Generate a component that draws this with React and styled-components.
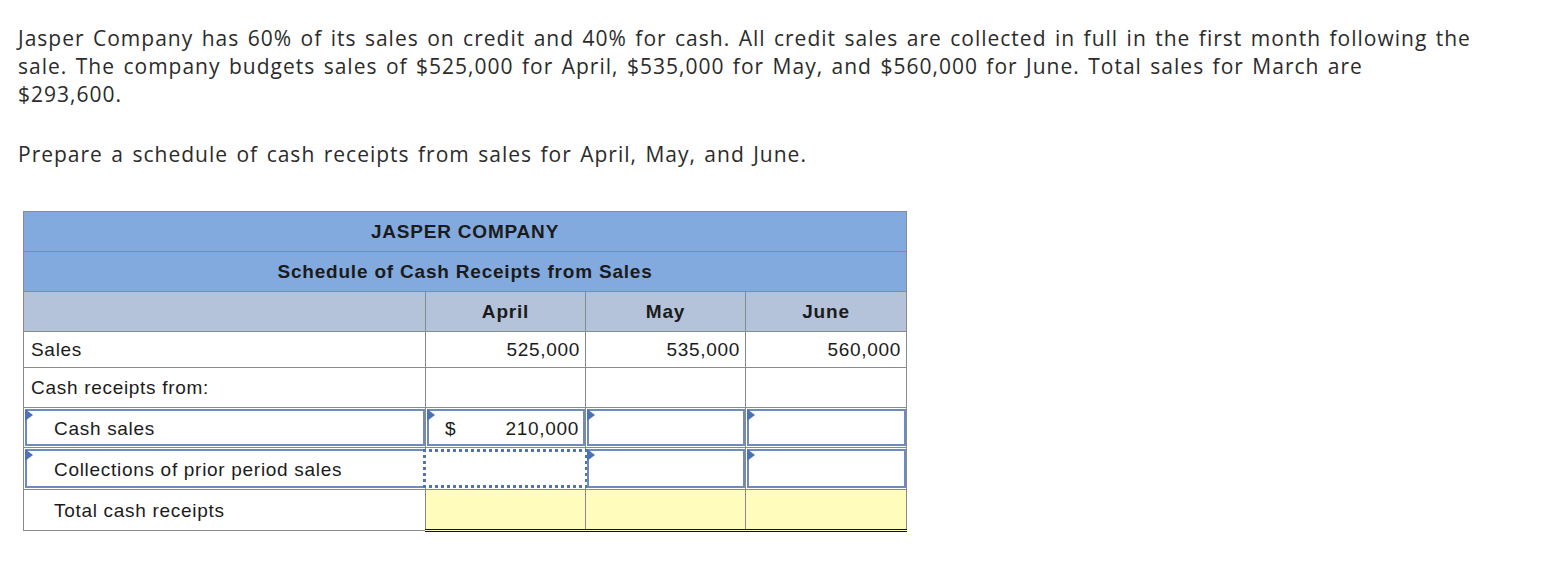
import React from "react";
import styled, { createGlobalStyle } from "styled-components";

const Global = createGlobalStyle`
  html, body { margin: 0; padding: 0; background: #fff; }
  body { font-family: "Open Sans", "Liberation Sans", sans-serif; }
`;

const Page = styled.div`
  padding: 24px 0 0 18px;
  width: 1520px;
`;

const Para = styled.p`
  margin: 0 0 32px 0;
  font-family: "Open Sans", "Liberation Sans", sans-serif;
  font-size: 21px;
  letter-spacing: 1px;
  word-spacing: 2px;
  line-height: 28px;
  color: #2b2b2b;
`;

const TableWrap = styled.div`
  margin-left: 5px;
  margin-top: 43px;
`;

const Table = styled.table`
  border-collapse: collapse;
  table-layout: fixed;
  width: 884px;
  font-family: "Liberation Sans", Arial, sans-serif;
  font-size: 19px;
  letter-spacing: 0.7px;
  color: #1b1b1b;
`;

const TitleCell = styled.td`
  background: #83aade;
  border: 1px solid #8a8a8a;
  height: 39px;
  padding: 0;
  text-align: center;
  font-weight: bold;
  letter-spacing: 0.8px;
`;

const HeadCell = styled.td`
  background: #b4c2da;
  border: 1px solid #8a8a8a;
  height: 39px;
  padding: 0;
  text-align: center;
  font-weight: bold;
  letter-spacing: 0.8px;
`;

const Cell = styled.td`
  border: 1px solid #8a8a8a;
  height: ${(p) => p.$h || 36}px;
  padding: 1px 5px 0 ${(p) => (p.$indent ? 30 : 7)}px;
  text-align: ${(p) => (p.$num ? "right" : "left")};
  background: ${(p) => (p.$total ? "#fffcbc" : "#fff")};
  border-bottom: ${(p) => (p.$total ? "3px double #111" : "1px solid #8a8a8a")};
  vertical-align: middle;
`;

const InputTd = styled.td`
  border: 1px solid #8a8a8a;
  height: ${(p) => p.$h}px;
  padding: 0;
`;

const InputBox = styled.div`
  position: relative;
  box-sizing: border-box;
  height: ${(p) => p.$h}px;
  margin: 1px ${(p) => (p.$dotted ? -3 : 0)}px 1px ${(p) => (p.$dotted ? -3 : 1)}px;
  border: ${(p) => (p.$dotted ? "3px dotted #4f74b5" : "2px solid #6d8bbf")};
  display: flex;
  align-items: center;
  justify-content: space-between;
  padding: 2px 4px 0 ${(p) => (p.$label ? 27 : 16)}px;
  background: #fff;
`;

const Flag = styled.span`
  position: absolute;
  top: -2px;
  left: -2px;
  width: 0;
  height: 0;
  border-top: 6px solid transparent;
  border-bottom: 6px solid transparent;
  border-left: 8px solid #4a72b8;
`;

function InputCell({ label, dollar, value, dotted, h = 38 }) {
  return (
    <InputTd $h={h}>
      <InputBox $label={!!label} $dotted={dotted} $h={h - 2}>
        {!dotted && <Flag />}
        {label ? (
          <span>{label}</span>
        ) : (
          <>
            <span>{dollar ? "$" : ""}</span>
            <span>{value || ""}</span>
          </>
        )}
      </InputBox>
    </InputTd>
  );
}

export default function App() {
  return (
    <>
      <Global />
      <Page>
        <Para>
          Jasper Company has 60% of its sales on credit and 40% for cash. All credit sales are collected in full in the first month following the
          <br />
          sale. The company budgets sales of $525,000 for April, $535,000 for May, and $560,000 for June. Total sales for March are
          <br />
          $293,600.
        </Para>
        <Para>Prepare a schedule of cash receipts from sales for April, May, and June.</Para>
        <TableWrap>
          <Table>
            <colgroup>
              <col style={{ width: 402 }} />
              <col style={{ width: 160 }} />
              <col style={{ width: 160 }} />
              <col style={{ width: 161 }} />
            </colgroup>
            <tbody>
              <tr>
                <TitleCell colSpan={4}>JASPER COMPANY</TitleCell>
              </tr>
              <tr>
                <TitleCell colSpan={4}>Schedule of Cash Receipts from Sales</TitleCell>
              </tr>
              <tr>
                <HeadCell />
                <HeadCell>April</HeadCell>
                <HeadCell>May</HeadCell>
                <HeadCell>June</HeadCell>
              </tr>
              <tr>
                <Cell $h={34}>Sales</Cell>
                <Cell $h={34} $num>525,000</Cell>
                <Cell $h={34} $num>535,000</Cell>
                <Cell $h={34} $num>560,000</Cell>
              </tr>
              <tr>
                <Cell $h={38}>Cash receipts from:</Cell>
                <Cell $h={38} />
                <Cell $h={38} />
                <Cell $h={38} />
              </tr>
              <tr>
                <InputCell label="Cash sales" h={39} />
                <InputCell dollar value="210,000" h={39} />
                <InputCell h={39} />
                <InputCell h={39} />
              </tr>
              <tr>
                <InputCell label="Collections of prior period sales" h={41} />
                <InputCell dotted h={41} />
                <InputCell h={41} />
                <InputCell h={41} />
              </tr>
              <tr>
                <Cell $h={38} $indent>Total cash receipts</Cell>
                <Cell $h={38} $total />
                <Cell $h={38} $total />
                <Cell $h={38} $total />
              </tr>
            </tbody>
          </Table>
        </TableWrap>
      </Page>
    </>
  );
}
